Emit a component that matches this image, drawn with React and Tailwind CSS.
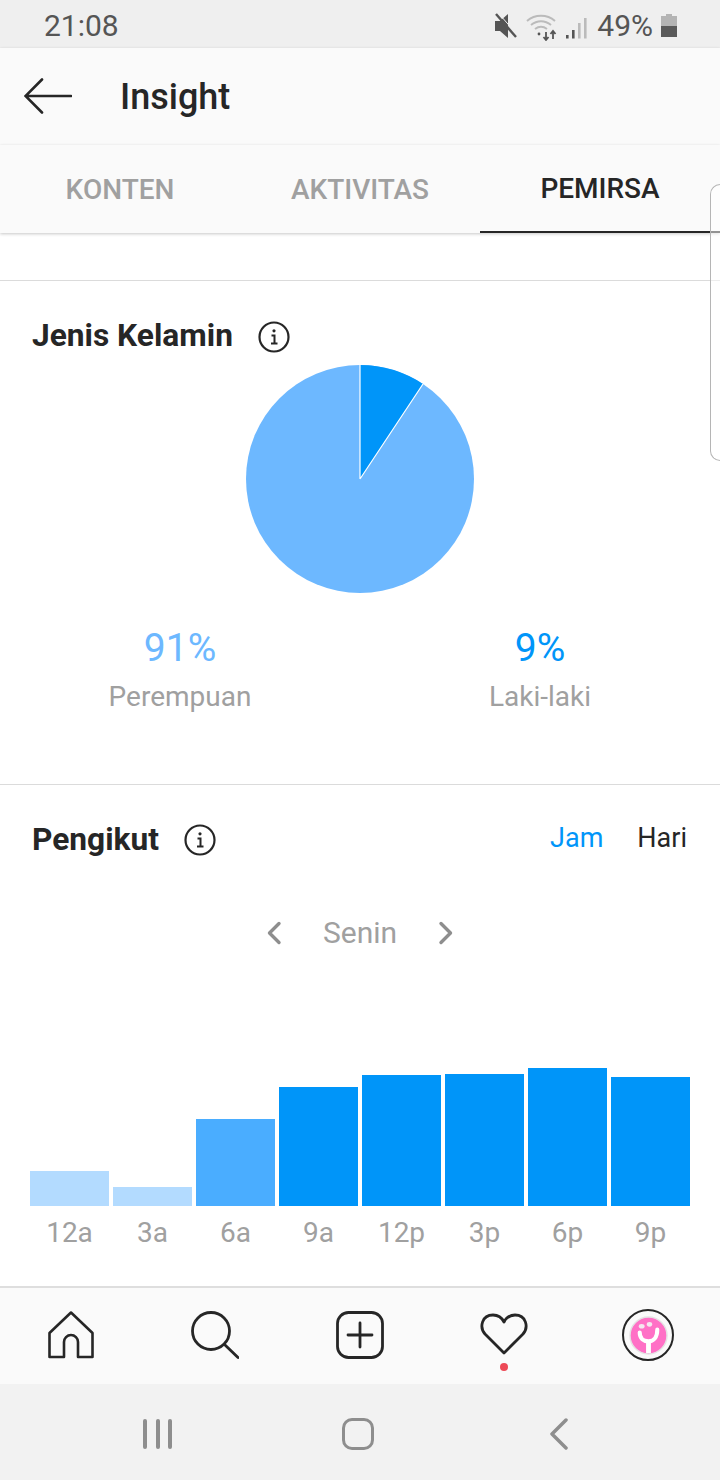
import React from "react";

const bars = [
  { label: "12a", h: 35, color: "bg-[#b3dbff]" },
  { label: "3a", h: 19, color: "bg-[#b3dbff]" },
  { label: "6a", h: 87, color: "bg-[#4aadff]" },
  { label: "9a", h: 119, color: "bg-[#0095f9]" },
  { label: "12p", h: 131, color: "bg-[#0095f9]" },
  { label: "3p", h: 132, color: "bg-[#0095f9]" },
  { label: "6p", h: 138, color: "bg-[#0095f9]" },
  { label: "9p", h: 129, color: "bg-[#0095f9]" },
];

const InfoIcon = () => (
  <svg width="32" height="32" viewBox="0 0 32 32" fill="none" stroke="#262626">
    <circle cx="16" cy="16" r="14.5" strokeWidth="2.2" />
    <path d="M13.5 14.5h3v7.5M13 22.5h6.5" strokeWidth="2" />
    <circle cx="16" cy="9.8" r="1.6" fill="#262626" stroke="none" />
  </svg>
);

const StatusIcons = () => (
  <svg width="93" height="30" viewBox="0 0 93 30" fill="none">
    <path d="M1 10h5l8-7v24l-8-7H1z" fill="#555" />
    <path d="M2 3l20 23" stroke="#555" strokeWidth="2.4" />
    <path d="M2 3l20 23" stroke="#efefef" strokeWidth="1" transform="translate(1.8 -1.6)" />
    <path d="M33 10c8-7 20-7 28 0M37 14c6-5 14-5 20 0M41 18c4-3 8-3 12 0" stroke="#bbb" strokeWidth="2" />
    <circle cx="45" cy="23" r="1.4" fill="#555" />
    <path d="M52 21v8M49.5 26l2.5 3 2.5-3" stroke="#555" strokeWidth="1.8" />
    <path d="M59 28v-8M56.5 23l2.5-3 2.5 3" stroke="#555" strokeWidth="1.8" />
    <rect x="72" y="24" width="2.6" height="3.5" fill="#555" />
    <rect x="78" y="19" width="2.6" height="8.5" fill="#555" />
    <rect x="84" y="12" width="2.6" height="15.5" fill="#bbb" />
    <rect x="90" y="7" width="2.6" height="20.5" fill="#bbb" />
  </svg>
);

const BatteryIcon = () => (
  <svg width="16" height="24" viewBox="0 0 16 24">
    <rect x="5" y="0" width="6" height="3" fill="#b4b4b4" />
    <rect x="0" y="2" width="16" height="11" fill="#b4b4b4" />
    <rect x="0" y="12" width="16" height="11" fill="#5a5a5a" />
  </svg>
);

export default function App() {
  return (
    <div className="relative flex h-[1480px] w-[720px] flex-col overflow-hidden bg-white font-['Roboto',sans-serif]">
      {/* status bar */}
      <div className="flex h-12 items-center justify-between bg-[#efefef] pt-[3px] pl-11 pr-[43px] text-[30px] text-[#555]">
        <span>21:08</span>
        <div className="flex items-center">
          <StatusIcons />
          <span className="ml-[10px] text-[#555]">49%</span>
          <span className="ml-[8px]">
            <BatteryIcon />
          </span>
        </div>
      </div>

      {/* header */}
      <div className="relative flex h-[97px] items-center bg-[#fafafa] pl-6 shadow-[0_1px_3px_rgba(0,0,0,0.22)]">
        <svg width="48" height="36" viewBox="0 0 48 36" fill="none" stroke="#262626" strokeWidth="2.6" strokeLinecap="round" className="-mt-[2px]">
          <path d="M47 18H2M18 1.5L1.5 18 18 34.5" />
        </svg>
        <h1 className="ml-[48px] text-[36px] font-medium text-[#262626]">Insight</h1>
      </div>

      {/* tabs */}
      <div className="relative grid h-[88px] grid-cols-3 bg-[#fafafa] text-[28px] font-medium shadow-[0_1px_3px_rgba(0,0,0,0.22)]">
        <div className="flex items-center justify-center pt-[2px] text-[#a0a0a0]">KONTEN</div>
        <div className="flex items-center justify-center pt-[2px] text-[#a0a0a0]">AKTIVITAS</div>
        <div className="flex items-center justify-center border-b-2 border-[#262626] pt-[2px] text-[#262626]">PEMIRSA</div>
      </div>

      <div className="h-12 shrink-0 border-b border-[#dbdbdb]" />

      {/* gender */}
      <section className="h-[504px] shrink-0 border-b border-[#dbdbdb]">
        <div className="flex h-[83px] items-end pl-8 pb-[8px]">
          <h2 className="text-[31.7px] leading-[40px] font-bold text-[#262626]">Jenis Kelamin</h2>
          <span className="mb-[3px] ml-[25px]">
            <InfoIcon />
          </span>
        </div>
        <div className="flex justify-center">
          <svg width="230" height="230" viewBox="0 0 230 230">
            <circle cx="115" cy="115" r="114" fill="#6db8ff" />
            <path d="M115 115V1A114 114 0 0 1 178 20Z" fill="#0095f9" />
            <path d="M115 115V1M115 115L178 20" stroke="#fff" strokeWidth="1.2" />
          </svg>
        </div>
        <div className="mt-[32px] grid grid-cols-2">
          <div className="flex flex-col items-center">
            <span className="text-[39px] leading-[44px] text-[#6db8ff]">91%</span>
            <span className="mt-[9px] text-[28px] leading-[36px] text-[#a0a0a0]">Perempuan</span>
          </div>
          <div className="flex flex-col items-center">
            <span className="text-[39px] leading-[44px] text-[#0095f9]">9%</span>
            <span className="mt-[9px] text-[28px] leading-[36px] text-[#a0a0a0]">Laki-laki</span>
          </div>
        </div>
      </section>

      {/* followers */}
      <section className="min-h-0 flex-1">
        <div className="flex items-center pt-[35px] pl-8 pr-[33px]">
          <h2 className="text-[31.7px] leading-[40px] font-bold text-[#262626]">Pengikut</h2>
          <span className="ml-[25px]">
            <InfoIcon />
          </span>
          <span className="ml-auto -mt-1 text-[27px] text-[#0095f9]">Jam</span>
          <span className="ml-[34px] -mt-1 text-[27px] text-[#262626]">Hari</span>
        </div>
        <div className="mt-[50px] flex items-center justify-center text-[30px] text-[#a0a0a0]">
          <svg width="16" height="24" viewBox="0 0 16 24" fill="none" stroke="#8e8e8e" strokeWidth="3.4" strokeLinecap="round" strokeLinejoin="round">
            <path d="M13 2.5L3.5 12l9.5 9.5" />
          </svg>
          <span className="mx-[41px]">Senin</span>
          <svg width="16" height="24" viewBox="0 0 16 24" fill="none" stroke="#8e8e8e" strokeWidth="3.4" strokeLinecap="round" strokeLinejoin="round">
            <path d="M3 2.5l9.5 9.5L3 21.5" />
          </svg>
        </div>
        <div className="mt-[113px] flex h-[138px] items-end gap-1 pl-[30px]">
          {bars.map((b) => (
            <div key={b.label} className={`w-[79px] ${b.color}`} style={{ height: b.h }} />
          ))}
        </div>
        <div className="mt-[10px] flex gap-1 pl-[30px]">
          {bars.map((b) => (
            <span key={b.label} className="w-[79px] text-center text-[28px] leading-[34px] text-[#a0a0a0]">
              {b.label}
            </span>
          ))}
        </div>
      </section>

      {/* bottom nav */}
      <nav className="flex h-[98px] shrink-0 items-start justify-between border-t-2 border-[#dedede] bg-[#fafafa] pl-[48px] pr-[46px] pt-[23px]">
        <svg width="46" height="48" viewBox="0 0 46 48" fill="none" stroke="#262626" strokeWidth="2.6" strokeLinejoin="round">
          <path d="M1.5 22L23 1.5 44.5 22v24H30V31a7 7 0 0 0-14 0v15H1.5z" />
        </svg>
        <svg className="ml-[3px]" width="48" height="48" viewBox="0 0 48 48" fill="none" stroke="#262626" strokeWidth="2.8" strokeLinecap="round">
          <circle cx="20" cy="20" r="18.5" />
          <path d="M33.5 33.5L47 46.5" />
        </svg>
        <svg className="ml-[2px]" width="48" height="48" viewBox="0 0 48 48" fill="none" stroke="#262626" strokeWidth="2.8" strokeLinecap="round">
          <rect x="1.5" y="1.5" width="45" height="45" rx="11" />
          <path d="M24 12v24M12 24h24" />
        </svg>
        <div className="relative ml-[2px]">
          <svg className="mt-[2px]" width="48" height="42" viewBox="0 0 48 42" fill="none" stroke="#262626" strokeWidth="2.8" strokeLinejoin="round">
            <path d="M24 40L5 21C-1 14 2 2 13 2c5 0 9 3 11 7 2-4 6-7 11-7 11 0 14 12 8 19z" />
          </svg>
          <span className="absolute top-[52px] left-5 size-2 rounded-full bg-[#ed4956]" />
        </div>
        <div className="-mt-[2px] flex size-[52px] items-center justify-center rounded-full border-[2.5px] border-[#262626]">
          <svg width="39" height="39" viewBox="0 0 40 40">
            <circle cx="20" cy="20" r="19" fill="#ff70c6" stroke="#e4e4e4" strokeWidth="1.5" />
            <ellipse cx="13" cy="10.5" rx="3" ry="2.4" fill="#f5e6ef" />
            <ellipse cx="21" cy="8.5" rx="2.8" ry="2.4" fill="#f5e6ef" />
            <path d="M11 17c0 6 4 9 9 9s9-4 9-12" fill="none" stroke="#fff" strokeWidth="4.2" strokeLinecap="round" />
            <path d="M20 26v12" stroke="#fff" strokeWidth="5" />
          </svg>
        </div>
      </nav>

      {/* system nav */}
      <div className="flex h-24 shrink-0 items-center bg-[#f2f2f2] pt-1 pl-[143px]">
        <div className="flex gap-[8.5px]">
          <span className="h-[30px] w-1 rounded-full bg-[#8e8e8e]" />
          <span className="h-[30px] w-1 rounded-full bg-[#8e8e8e]" />
          <span className="h-[30px] w-1 rounded-full bg-[#8e8e8e]" />
        </div>
        <span className="ml-[170px] size-8 rounded-[10px] border-[3.5px] border-[#8e8e8e]" />
        <svg className="ml-[175px]" width="20" height="32" viewBox="0 0 20 32" fill="none" stroke="#8e8e8e" strokeWidth="3.5" strokeLinecap="round" strokeLinejoin="round">
          <path d="M17 2L3 16l14 14" />
        </svg>
      </div>

      {/* edge panel handle */}
      <div className="absolute top-[184px] right-0 h-[277px] w-[10px] rounded-l-[10px] border border-r-0 border-[#b5b5b5] bg-white/50" />
    </div>
  );
}
